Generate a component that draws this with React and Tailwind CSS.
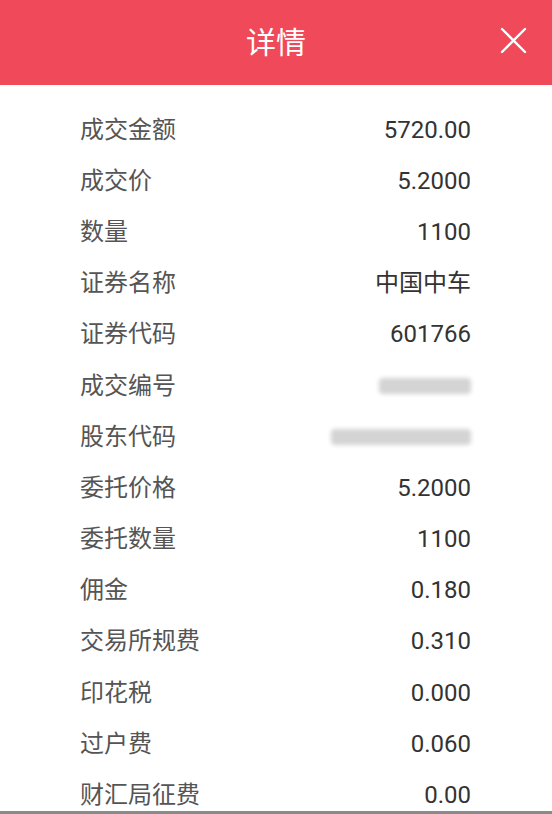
import React from 'react'

const rows = [
  { label: "成交金额", value: "5720.00" },
  { label: "成交价", value: "5.2000" },
  { label: "数量", value: "1100" },
  { label: "证券名称", value: "中国中车" },
  { label: "证券代码", value: "601766" },
  { label: "成交编号", blur: "w-[92px]" },
  { label: "股东代码", blur: "w-[140px]" },
  { label: "委托价格", value: "5.2000" },
  { label: "委托数量", value: "1100" },
  { label: "佣金", value: "0.180" },
  { label: "交易所规费", value: "0.310" },
  { label: "印花税", value: "0.000" },
  { label: "过户费", value: "0.060" },
  { label: "财汇局征费", value: "0.00" },
];

function Row({ row }) {
  return (
    <div className="h-[51.2px] flex items-center justify-between">
      <span className="text-[24px] text-[#555555]">{row.label}</span>
      {row.blur ? (
        <div className={"h-[16px] rounded-sm bg-[#d4d4d4] blur-[2px] " + row.blur}></div>
      ) : (
        <span className="text-[24px] text-[#333333]">{row.value}</span>
      )}
    </div>
  );
}

export default function App() {
  return (
    <div
      className="w-[552px] h-[814px] flex flex-col overflow-hidden bg-white"
      style={{ fontFamily: 'Roboto, "Noto Sans CJK SC", sans-serif' }}>
      <div className="h-[85px] shrink-0 bg-[#f04a5a] flex items-center justify-center relative">
        <span className="text-[30px] text-white">详情</span>
        <svg
          className="absolute right-[25px] top-[27px]"
          width="27"
          height="27"
          viewBox="0 0 27 27"
          fill="none"
          stroke="white"
          strokeWidth="2.4"
          strokeLinecap="round">
          <path d="M2 2 L25 25 M25 2 L2 25"></path>
        </svg>
      </div>
      <div className="flex-1 overflow-hidden pt-[19px] pl-[80px] pr-[81px]">
        {rows.map(function (row) {
          return <Row key={row.label} row={row}></Row>;
        })}
      </div>
      <div className="h-[3px] shrink-0 bg-[#8a8a8a]"></div>
    </div>
  );
}
